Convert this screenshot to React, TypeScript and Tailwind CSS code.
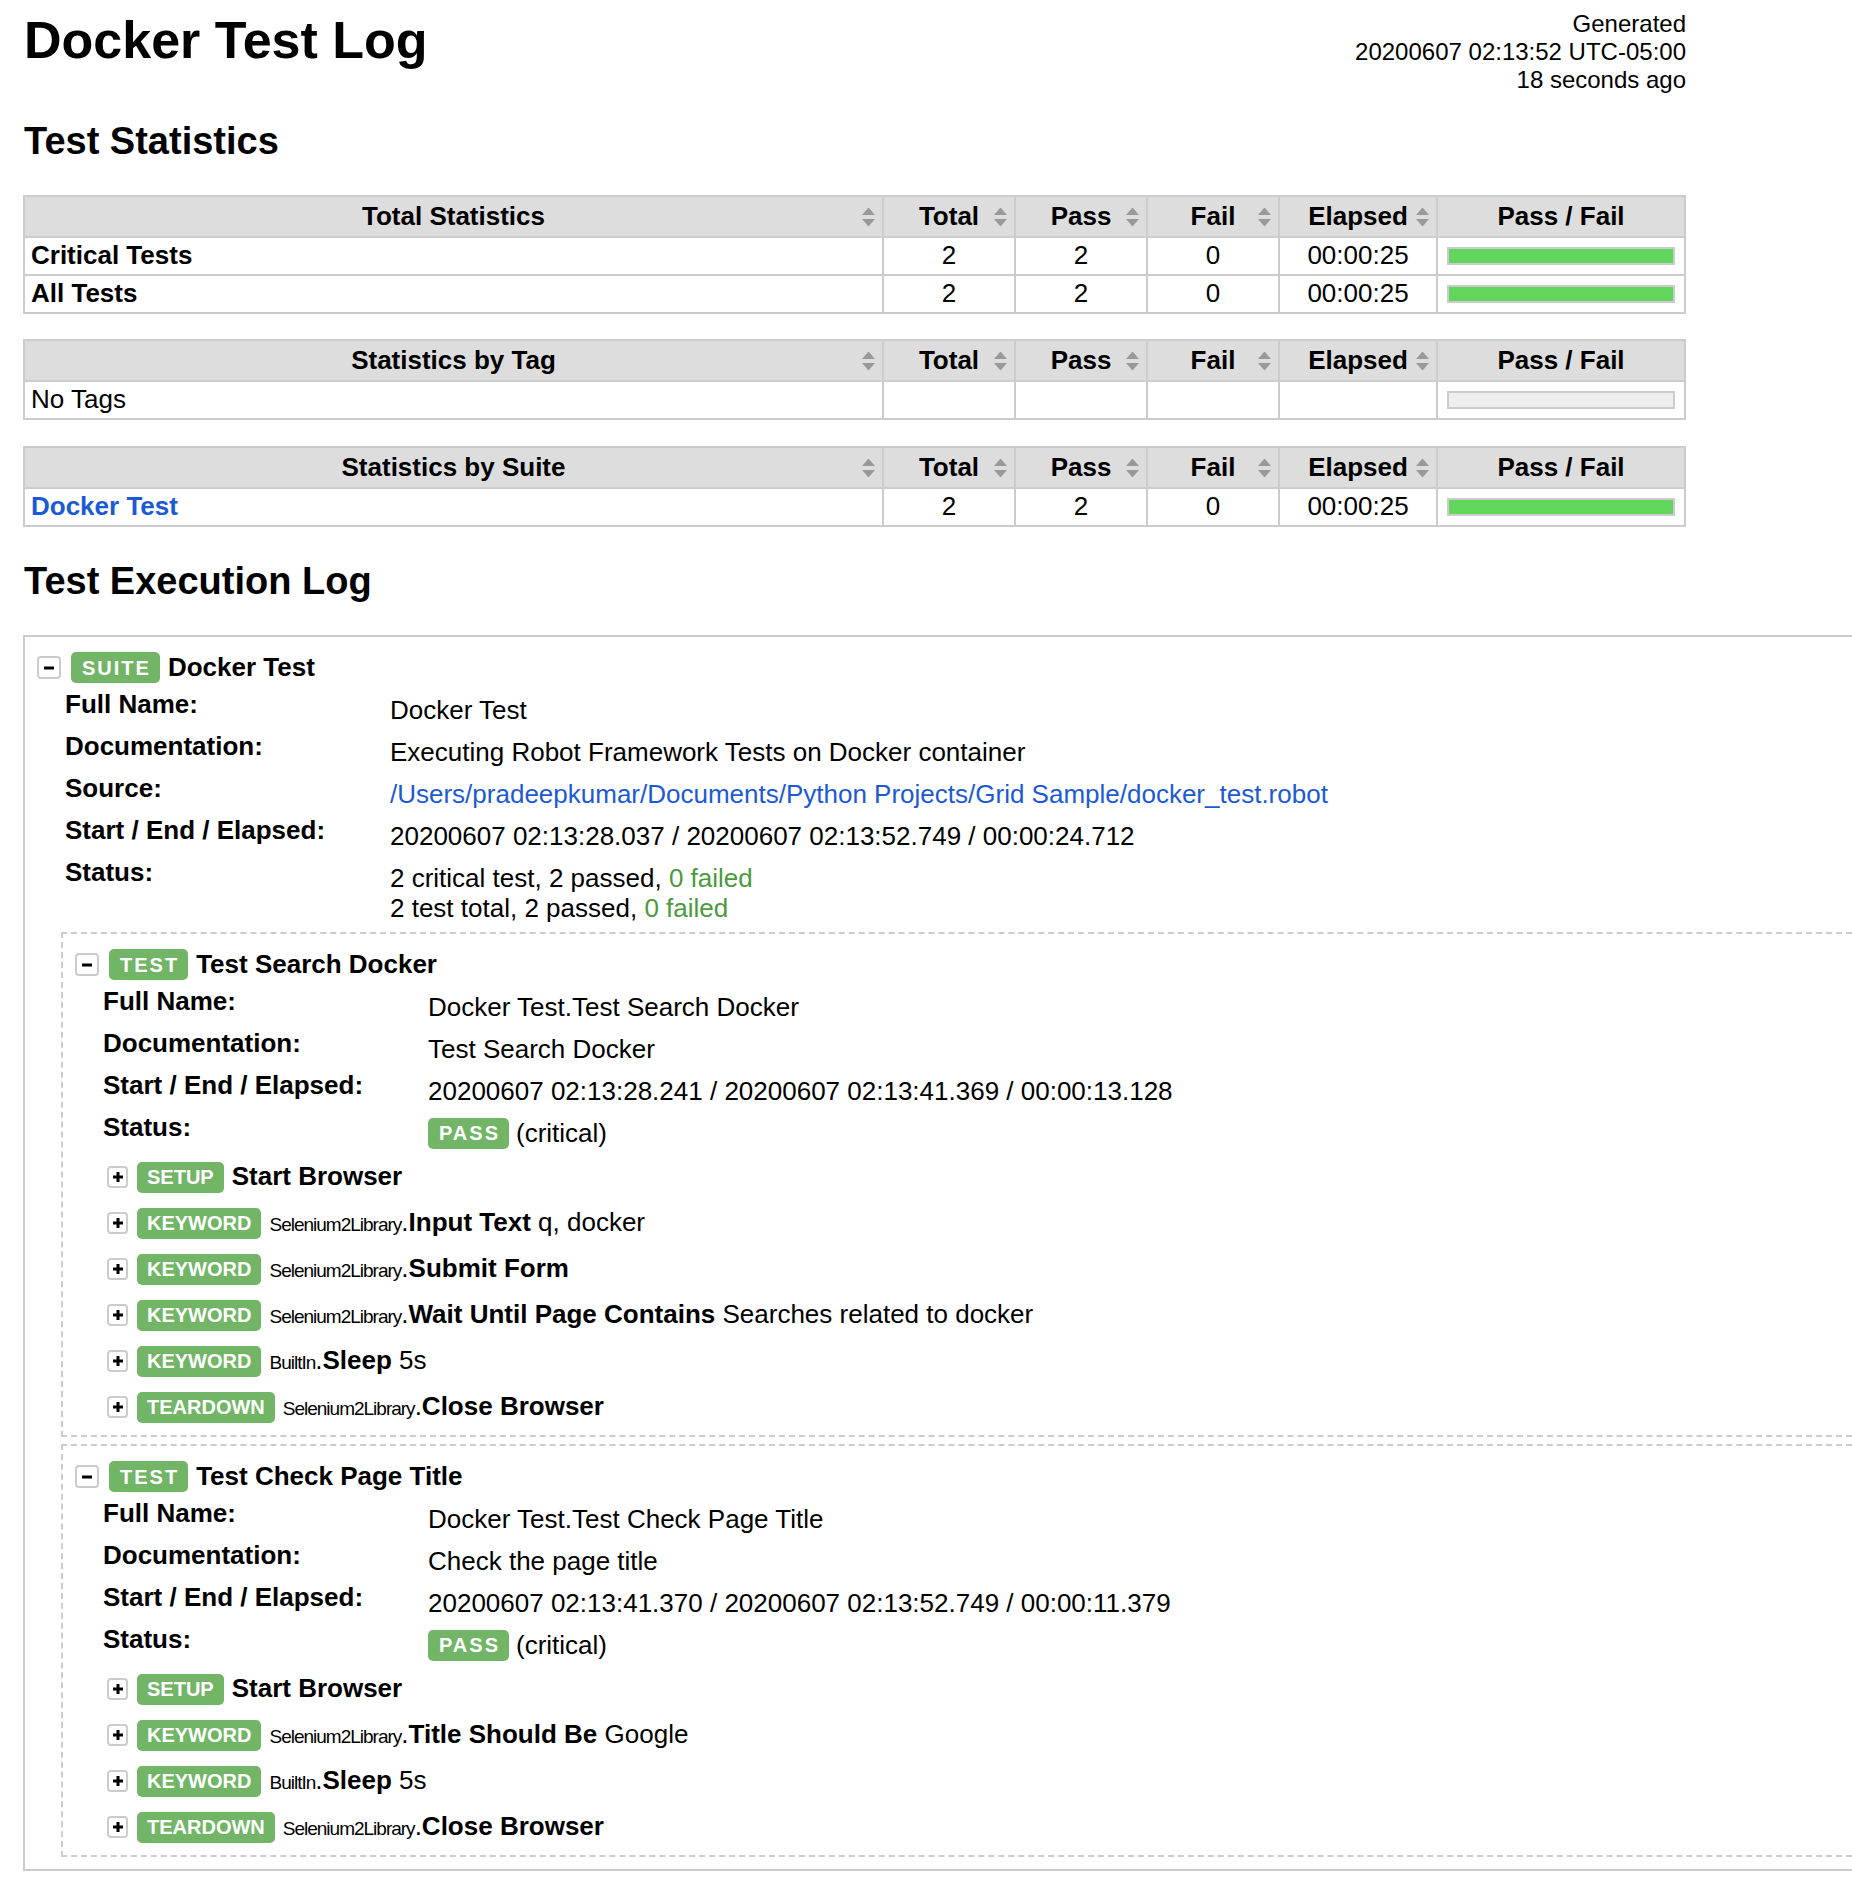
import { Fragment, type ReactNode } from 'react';
import clsx from 'clsx';

type Keyword = { type: 'SETUP' | 'KEYWORD' | 'TEARDOWN'; lib?: string; name: string; args?: string };

interface TestCase {
  name: string;
  full: string;
  doc: string;
  times: string;
  keywords: Keyword[];
}

const TESTS: TestCase[] = [
  {
    name: 'Test Search Docker',
    full: 'Docker Test.Test Search Docker',
    doc: 'Test Search Docker',
    times: '20200607 02:13:28.241 / 20200607 02:13:41.369 / 00:00:13.128',
    keywords: [
      { type: 'SETUP', name: 'Start Browser' },
      { type: 'KEYWORD', lib: 'Selenium2Library', name: 'Input Text', args: 'q, docker' },
      { type: 'KEYWORD', lib: 'Selenium2Library', name: 'Submit Form' },
      { type: 'KEYWORD', lib: 'Selenium2Library', name: 'Wait Until Page Contains', args: 'Searches related to docker' },
      { type: 'KEYWORD', lib: 'BuiltIn', name: 'Sleep', args: '5s' },
      { type: 'TEARDOWN', lib: 'Selenium2Library', name: 'Close Browser' },
    ],
  },
  {
    name: 'Test Check Page Title',
    full: 'Docker Test.Test Check Page Title',
    doc: 'Check the page title',
    times: '20200607 02:13:41.370 / 20200607 02:13:52.749 / 00:00:11.379',
    keywords: [
      { type: 'SETUP', name: 'Start Browser' },
      { type: 'KEYWORD', lib: 'Selenium2Library', name: 'Title Should Be', args: 'Google' },
      { type: 'KEYWORD', lib: 'BuiltIn', name: 'Sleep', args: '5s' },
      { type: 'TEARDOWN', lib: 'Selenium2Library', name: 'Close Browser' },
    ],
  },
];

// grid with 2px lines drawn by the gray background showing through the gaps
const GRID =
  'grid grid-cols-[857px_130px_130px_130px_156px_246px] grid-rows-[39px] auto-rows-[36px] gap-[2px] bg-[#ccc] p-[2px] w-[1663px]';

function SortArrows() {
  return (
    <svg width="15" height="19" viewBox="0 0 15 19" className="absolute right-[6px] top-1/2 -translate-y-1/2">
      <polygon points="7.5,0 14,7.5 1,7.5" fill="#999" />
      <polygon points="1,11.5 14,11.5 7.5,19" fill="#999" />
    </svg>
  );
}

function HeadCell({ children, sort = true }: { children: ReactNode; sort?: boolean }) {
  return (
    <div className="relative bg-[#ddd] flex items-center justify-center font-bold">
      {children}
      {sort && <SortArrows />}
    </div>
  );
}

function Bar({ pass }: { pass: boolean }) {
  return (
    <div className="bg-white flex items-center px-[9px]">
      <div className={clsx('w-full h-[18px] border-2 border-[#ccc]', pass ? 'bg-[#62d65c]' : 'bg-[#eee]')} />
    </div>
  );
}

function StatTable({ title, rows, className }: { title: string; rows: { label: ReactNode; values?: string[] }[]; className?: string }) {
  return (
    <div className={clsx(GRID, className)}>
      <HeadCell>{title}</HeadCell>
      <HeadCell>Total</HeadCell>
      <HeadCell>Pass</HeadCell>
      <HeadCell>Fail</HeadCell>
      <HeadCell>Elapsed</HeadCell>
      <HeadCell sort={false}>Pass / Fail</HeadCell>
      {rows.map((r, i) => (
        <Fragment key={i}>
          <div className="bg-white flex items-center pl-[6px]">{r.label}</div>
          {[0, 1, 2, 3].map((j) => (
            <div key={j} className="bg-white flex items-center justify-center">
              {r.values?.[j]}
            </div>
          ))}
          <Bar pass={!!r.values} />
        </Fragment>
      ))}
    </div>
  );
}

function Toggle({ open, small }: { open?: boolean; small?: boolean }) {
  return (
    <span
      className={clsx(
        'flex items-center justify-center border-2 border-[#ccc] rounded-[4px] bg-white shrink-0',
        small ? 'w-[21px] h-[22px]' : 'w-[24px] h-[23px]'
      )}
    >
      <svg width="12" height="12" viewBox="0 0 12 12">
        <rect x="1" y="4.5" width="10" height="3" fill="#000" />
        {!open && <rect x="4.5" y="1" width="3" height="10" fill="#000" />}
      </svg>
    </span>
  );
}

function Badge({ children, spaced, className }: { children: ReactNode; spaced?: boolean; className?: string }) {
  return (
    <span
      className={clsx(
        'inline-flex items-center h-[31px] rounded-[5px] bg-[#72b566] text-white font-bold text-[20px] leading-none shrink-0',
        spaced ? 'tracking-[2px] pl-[11px] pr-[9px]' : 'px-[10px]',
        className
      )}
    >
      {children}
    </span>
  );
}

function Meta({ rows }: { rows: [string, ReactNode][] }) {
  return (
    <div className="ml-[28px] mt-[6px] grid grid-cols-[325px_1fr]">
      {rows.map(([k, v]) => (
        <Fragment key={k}>
          <div className="font-bold leading-[30px] pb-[12px]">{k}:</div>
          <div className="leading-[30px] py-[6px]">{v}</div>
        </Fragment>
      ))}
    </div>
  );
}

function KeywordRow({ kw }: { kw: Keyword }) {
  return (
    <div className="flex items-center h-[46px] ml-[32px]">
      <Toggle small />
      <Badge className="ml-[9px]">{kw.type}</Badge>
      <span className="ml-[8px] whitespace-nowrap">
        {kw.lib && (
          <>
            <span className="text-[19px] tracking-[-1px]">{kw.lib}</span>.
          </>
        )}
        <span className="font-bold">{kw.name}</span>
        {kw.args && ` ${kw.args}`}
      </span>
    </div>
  );
}

function TestBlock({ t, className }: { t: TestCase; className?: string }) {
  return (
    <div className={clsx('border-2 border-r-0 border-dashed border-[#ccc] pl-[12px] pt-[15px] pb-[5px]', className)}>
      <div className="flex items-center h-[31px]">
        <Toggle open />
        <Badge spaced className="ml-[10px]">TEST</Badge>
        <span className="ml-[8px] font-bold">{t.name}</span>
      </div>
      <Meta
        rows={[
          ['Full Name', t.full],
          ['Documentation', t.doc],
          ['Start / End / Elapsed', t.times],
          [
            'Status',
            <span className="flex items-center h-[30px]">
              <Badge spaced>PASS</Badge>
              <span className="ml-[7px]">(critical)</span>
            </span>,
          ],
        ]}
      />
      {t.keywords.map((kw, i) => (
        <KeywordRow key={i} kw={kw} />
      ))}
    </div>
  );
}

export default function App() {
  return (
    <div className="min-h-[1878px] bg-white text-black font-['Liberation_Sans',Arial,sans-serif] text-[26px] leading-[1.15] px-[23px] overflow-hidden">
      <div className="flex justify-between items-start w-[1663px]">
        <h1 className="text-[52px] font-bold leading-none mt-[14px] pl-[1px]">Docker Test Log</h1>
        <div className="text-right text-[24px] leading-[28px] pt-[10px]">
          <div>Generated</div>
          <div>20200607 02:13:52 UTC-05:00</div>
          <div>18 seconds ago</div>
        </div>
      </div>

      <h2 className="text-[38px] font-bold leading-none mt-[28px] pl-[1px]">Test Statistics</h2>

      <StatTable
        className="mt-[35px]"
        title="Total Statistics"
        rows={[
          { label: <span className="font-bold">Critical Tests</span>, values: ['2', '2', '0', '00:00:25'] },
          { label: <span className="font-bold">All Tests</span>, values: ['2', '2', '0', '00:00:25'] },
        ]}
      />
      <StatTable className="mt-[25px]" title="Statistics by Tag" rows={[{ label: 'No Tags' }]} />
      <StatTable
        className="mt-[26px]"
        title="Statistics by Suite"
        rows={[{ label: <span className="font-bold text-[#1c5ad4]">Docker Test</span>, values: ['2', '2', '0', '00:00:25'] }]}
      />

      <h2 className="text-[38px] font-bold leading-none mt-[35px] pl-[1px]">Test Execution Log</h2>

      <div className="mt-[35px] -mr-[23px] border-2 border-r-0 border-[#ccc] pl-[12px] pt-[15px] pb-[12px]">
        <div className="flex items-center h-[31px]">
          <Toggle open />
          <Badge spaced className="ml-[10px]">SUITE</Badge>
          <span className="ml-[8px] font-bold">Docker Test</span>
        </div>
        <Meta
          rows={[
            ['Full Name', 'Docker Test'],
            ['Documentation', 'Executing Robot Framework Tests on Docker container'],
            [
              'Source',
              <span className="text-[#1c5ad4]">/Users/pradeepkumar/Documents/Python Projects/Grid Sample/docker_test.robot</span>,
            ],
            ['Start / End / Elapsed', '20200607 02:13:28.037 / 20200607 02:13:52.749 / 00:00:24.712'],
            [
              'Status',
              <>
                <div>
                  2 critical test, 2 passed, <span className="text-[#4b9a3d]">0 failed</span>
                </div>
                <div>
                  2 test total, 2 passed, <span className="text-[#4b9a3d]">0 failed</span>
                </div>
              </>,
            ],
          ]}
        />
        <div className="ml-[24px] mt-[3px]">
          <TestBlock t={TESTS[0]} />
          <TestBlock t={TESTS[1]} className="mt-[7px]" />
        </div>
      </div>
    </div>
  );
}
